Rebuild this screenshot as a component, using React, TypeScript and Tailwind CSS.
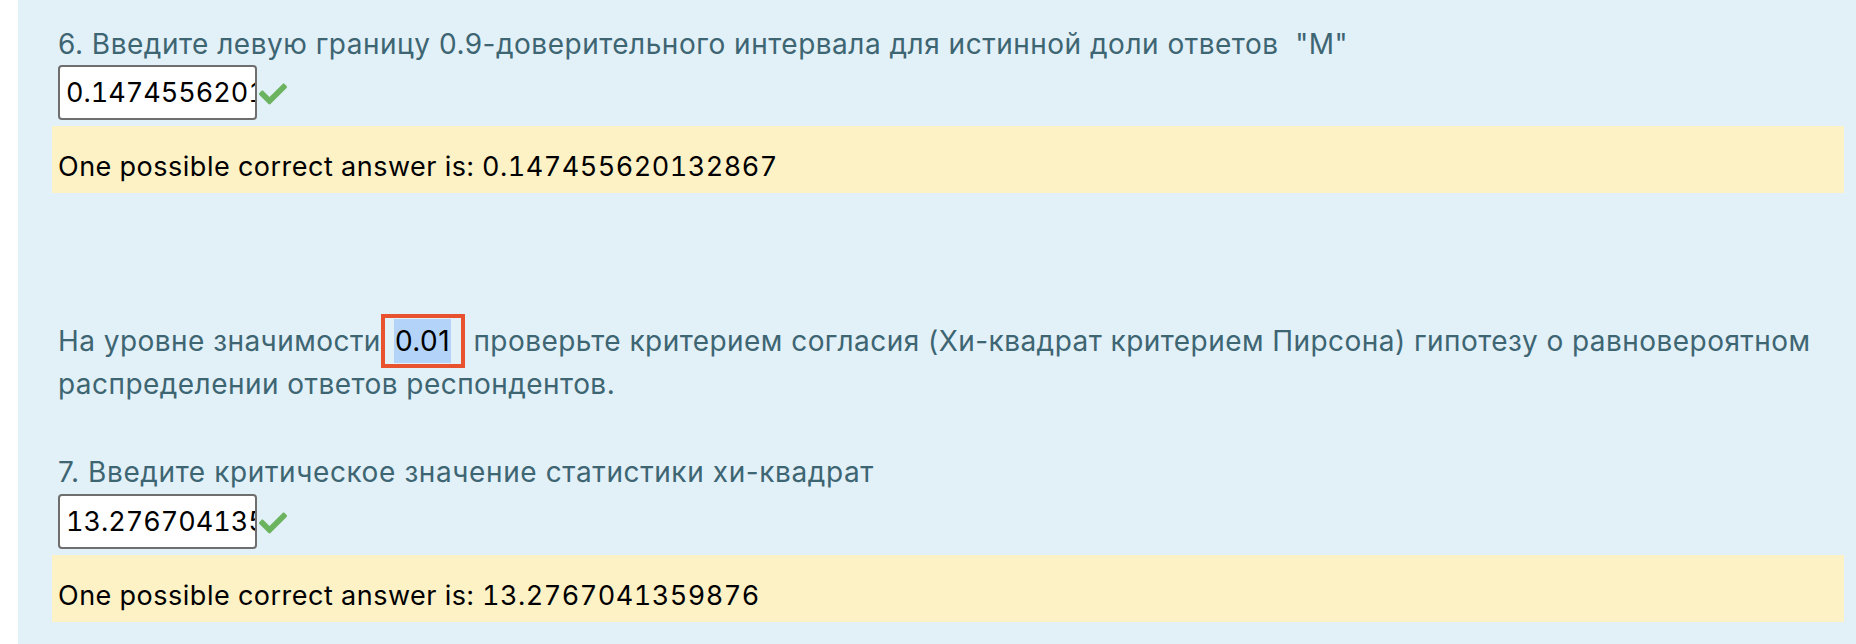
import React from 'react';
import { FaCheck } from 'react-icons/fa';

const font = { fontFamily: 'Inter, "Noto Sans", sans-serif' };

const AnswerInput: React.FC<{ value: string }> = ({ value }) => (
  <div className="flex items-center">
    <input
      readOnly
      value={value}
      className="w-[199px] h-[55px] border-2 border-[#6e6e6e] rounded-[4px] bg-white pl-[6px] pr-0 text-[27px] tabular-nums text-black outline-none"
      style={font}
    />
    <FaCheck className="ml-[2px] mt-[2px] text-[#6bb35e]" size={28} />
  </div>
);

const Feedback: React.FC<{ text: string }> = ({ text }) => (
  <div className="bg-[#fdf1c6] h-[67px] pt-[24px] px-[6px] text-[27px] leading-[33px] tracking-[0.5px] tabular-nums text-black">
    {text}
  </div>
);

export default function App() {
  return (
    <div className="w-[1856px] h-[644px] bg-white pl-[18px] overflow-hidden" style={font}>
      <div className="h-full bg-[#e2f0f8] pl-[34px] pr-[12px] pt-[24px] text-[#3d6572]">
        {/* question 6 */}
        <div className="px-[6px] text-[28px] leading-[40px] tracking-[0.5px]">
          6. Введите левую границу 0.9-доверительного интервала для истинной доли ответов &nbsp;"M"
        </div>
        <div className="px-[6px] mt-[1px]">
          <AnswerInput value="0.147455620132867" />
        </div>
        <div className="mt-[6px]">
          <Feedback text="One possible correct answer is: 0.147455620132867" />
        </div>

        {/* instruction */}
        <p className="mt-[127px] px-[6px] text-[28px] leading-[43px] tracking-[0.45px]">
          На уровне значимости
          <span className="inline-block border-4 border-[#e9522f] py-[1px] pl-[9px] pr-[10px] -my-[6px] align-baseline">
            <span className="inline-block bg-[#b3d4f8] text-black leading-[44px] px-[1px]">0.01</span>
          </span>{' '}
          проверьте критерием согласия (Хи-квадрат критерием Пирсона) гипотезу о равновероятном распределении ответов респондентов.
        </p>

        {/* question 7 */}
        <div className="mt-[46px] px-[6px] text-[28px] leading-[40px] tracking-[0.6px]">
          7. Введите критическое значение статистики хи-квадрат
        </div>
        <div className="px-[6px] mt-[2px]">
          <AnswerInput value="13.2767041359876" />
        </div>
        <div className="mt-[6px]">
          <Feedback text="One possible correct answer is: 13.2767041359876" />
        </div>
      </div>
    </div>
  );
}
